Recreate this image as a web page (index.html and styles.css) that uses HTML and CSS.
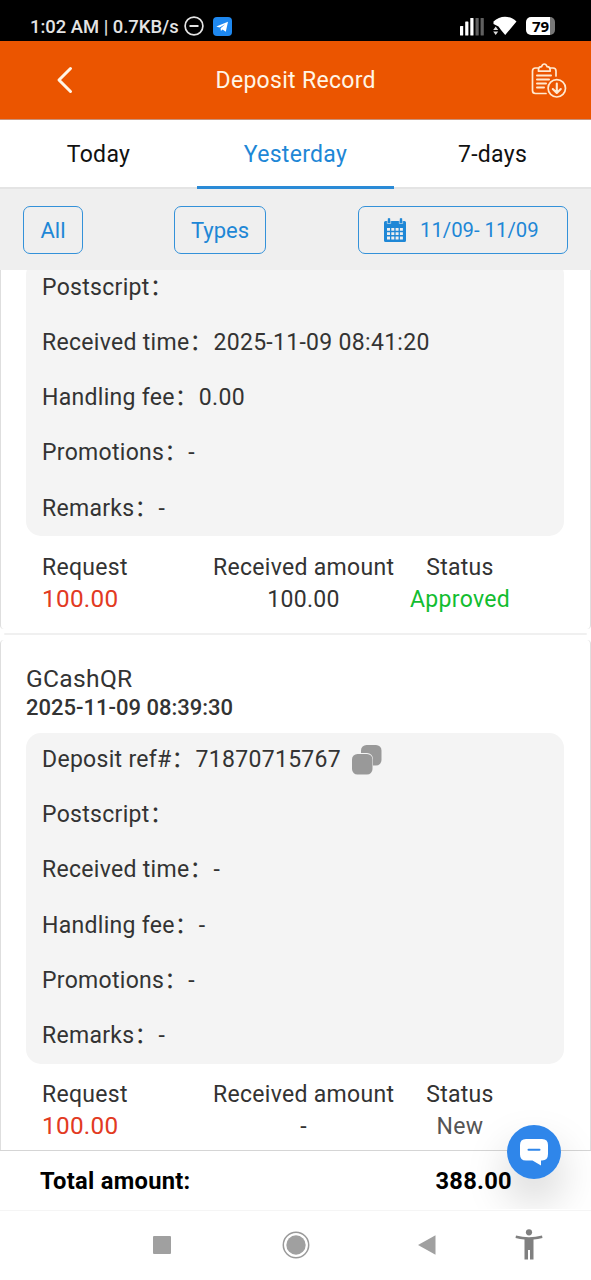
FILE: index.html
```html
<!DOCTYPE html>
<html lang="en">
<head>
<meta charset="utf-8">
<title>Deposit Record</title>
<link rel="stylesheet" href="styles.css">
</head>
<body>
<div class="screen">
  <div class="status-bar">
    <span class="clock">1:02 AM | 0.7KB/s</span>
    <svg class="dnd" width="20" height="20" viewBox="0 0 20 20"><circle cx="10" cy="10" r="8.9" fill="none" stroke="#e4e4e4" stroke-width="1.7"/><path d="M5.5 10h9" stroke="#e4e4e4" stroke-width="2"/></svg>
    <svg class="plane" width="19" height="19" viewBox="0 0 19 19"><rect width="19" height="19" rx="4" fill="#1e88f0"/><path d="M3.3 9.5 15 4.7 12.8 14.7 9.5 12.4 7.9 14 7.6 11.2 12.2 7.2 6.5 10.6Z" fill="#fff"/></svg>
    <span class="grow"></span>
    <svg width="25" height="19" viewBox="0 0 25 19"><g fill="#fff"><rect x="0" y="9" width="3.2" height="9.5" rx=".6"/><rect x="5.2" y="4.5" width="3.2" height="14" rx=".6"/><rect x="10.3" y="1" width="3.2" height="17.5" rx=".6"/></g><g fill="#606060"><rect x="15.5" y="1" width="3.2" height="17.5" rx=".6"/><rect x="20.6" y="1" width="3.2" height="17.5" rx=".6"/></g></svg>
    <svg class="wifi" width="24" height="20" viewBox="0 0 24 20"><path d="M.5 5.5C7-.8 17-.8 23.5 5.5L12.2 19 8 14 5.5 10.5.5 8Z" fill="#fff"/><path d="M2.7 10.5 5.2 14H.2ZM2.7 19 .2 15.5h5Z" fill="#ddd"/></svg>
    <span class="battery">79</span>
  </div>
  <header class="header">
    <svg class="back" width="17" height="28" viewBox="0 0 17 28"><path d="M14.5 2.5 3 14 14.5 25.5" fill="none" stroke="#fff5e6" stroke-width="3" stroke-linecap="round" stroke-linejoin="round"/></svg>
    <h1 class="title">Deposit Record</h1>
    <svg class="export" width="36" height="36" viewBox="0 0 36 36" fill="none" stroke="#ffe9d0" stroke-width="1.7" stroke-linecap="round" stroke-linejoin="round"><path d="M7 5H4.500Q1.500 5 1.500 8v19.500q0 3 3 3H15M19.500 5h2.500q3 0 3 3v5"/><path d="M7.500 8.200V6.500q0-2.500 3-2.800Q11.500 1 13.300 1t2.800 2.700q3 .3 3 2.800v1.700Z"/><path d="M6 12.500h14M6 16.500h12M6 20.500h9M6 24.500h7" stroke-width="2"/><circle cx="25.800" cy="25.300" r="8.700"/><path d="M25.800 20.500v9M21.800 26l4 4 4-4" stroke-width="2.100"/></svg>
  </header>
  <nav class="tabs">
    <div class="tab">Today</div>
    <div class="tab active">Yesterday</div>
    <div class="tab">7-days</div>
  </nav>
  <div class="filters">
    <button class="chip all">All</button>
    <button class="chip types">Types</button>
    <button class="chip dates">
      <svg width="22" height="24" viewBox="0 0 22 24"><path d="M0 4.500Q0 3 1.500 3H3.500V2q0-2 1.500-2t1.500 2v1h9V2q0-2 1.500-2t1.500 2v1h2Q22 3 22 4.500V22.500Q22 24 20.500 24H1.500Q0 24 0 22.500Z" fill="#1e87d6"/><path d="M3.300 1v4.500h3.400V1M15.300 1v4.500h3.400V1" fill="none" stroke="#efefef" stroke-width=".6"/><g fill="#efefef"><path d="M3 10h3v2.800H3zM7.300 10h3v2.800h-3zM11.600 10h3v2.800h-3zM15.900 10h3v2.800h-3zM3 14.300h3v2.800H3zM7.300 14.300h3v2.800h-3zM11.600 14.300h3v2.800h-3zM15.900 14.300h3v2.800h-3zM3 18.600h3v2.800H3zM7.300 18.600h3v2.800h-3zM11.600 18.600h3v2.800h-3zM15.900 18.600h3v2.800h-3z"/></g></svg>
      <span>11/09- 11/09</span>
    </button>
  </div>
  <main class="list">
    <article class="card first">
      <div class="details">
        <div class="row">Postscript<i>：</i></div>
        <div class="row">Received time<i>：</i>2025-11-09 08:41:20</div>
        <div class="row">Handling fee<i>：</i>0.00</div>
        <div class="row">Promotions<i>：</i>-</div>
        <div class="row">Remarks<i>：</i>-</div>
      </div>
      <div class="summary">
        <div><p>Request</p><p class="requested">100.00</p></div>
        <div class="center"><p>Received amount</p><p>100.00</p></div>
        <div class="center"><p>Status</p><p class="approved">Approved</p></div>
      </div>
    </article>
    <div class="divider"></div>
    <article class="card second">
      <h2 class="method">GCashQR</h2>
      <p class="time">2025-11-09 08:39:30</p>
      <div class="details">
        <div class="row">Deposit ref#<i>：</i>71870715767<svg class="copy" width="30" height="30" viewBox="0 0 30 30"><rect x="9" y="0" width="20.500" height="20.500" rx="5.500" fill="#999"/><rect x="-.5" y="8" width="21.500" height="22" rx="6" fill="#f4f4f4"/><rect x="0" y="9" width="20.500" height="20.500" rx="5.500" fill="#999"/></svg></div>
        <div class="row">Postscript<i>：</i></div>
        <div class="row">Received time<i>：</i>-</div>
        <div class="row">Handling fee<i>：</i>-</div>
        <div class="row">Promotions<i>：</i>-</div>
        <div class="row">Remarks<i>：</i>-</div>
      </div>
      <div class="summary">
        <div><p>Request</p><p class="requested">100.00</p></div>
        <div class="center"><p>Received amount</p><p>-</p></div>
        <div class="center"><p>Status</p><p class="new">New</p></div>
      </div>
    </article>
  </main>
  <footer class="total"><span>Total amount:</span><span class="sum">388.00</span></footer>
  <div class="system-nav">
    <svg class="recent" width="18" height="18"><rect width="18" height="18" rx="1" fill="#a0a0a0"/></svg>
    <svg class="home" width="28" height="28" viewBox="0 0 28 28"><circle cx="14" cy="14" r="12.700" fill="none" stroke="#999" stroke-width="1.500"/><circle cx="14" cy="14" r="9.700" fill="#a0a0a0"/></svg>
    <svg class="prev" width="18" height="20" viewBox="0 0 18 20"><path d="M0 10 17.500.3v19.400Z" fill="#a0a0a0"/></svg>
    <svg class="person" width="28" height="31" viewBox="0 0 28 31"><circle cx="14" cy="3.300" r="3.100" fill="#808080"/><path d="M1 6.500Q14 10 27 6.500L27.500 9Q23 10 18.500 10.500V30.500H15V21H13v9.500H9.500v-20Q5 10 .5 9Z" fill="#808080"/></svg>
  </div>
  <div class="shadow-clip"><div class="chat-shadow"></div></div>
  <button class="chat"><svg width="28" height="27" viewBox="0 0 28 27"><path d="M6 0H22Q28 0 28 6V15Q28 21.500 22 21.500H21V26.500L12.500 21.500H6Q0 21.500 0 15.500V6Q0 0 6 0Z" fill="#fff"/><path d="M8.500 10.700h11" stroke="#2f86ea" stroke-width="2" stroke-linecap="round"/></svg></button>
</div>
</body>
</html>
```
FILE: styles.css
```css
* { box-sizing: border-box; }
body { margin: 0; background: #fff; }
h1, h2, p { margin: 0; font-weight: 400; }
i { font-style: normal; }
button { background: none; padding: 0; margin: 0; font: inherit; letter-spacing: inherit; }
svg { display: block; flex: none; }
.screen {
  position: relative;
  width: 591px;
  height: 1280px;
  overflow: hidden;
  display: flex;
  flex-direction: column;
  font: 23px/32px Roboto, "Noto Sans CJK SC", sans-serif;
  letter-spacing: .3px;
  color: #333;
}
.screen > * { flex-shrink: 0; }
.status-bar {
  height: 41px;
  padding: 11px 36px 0 30px;
  display: flex;
  align-items: center;
  background: #000;
  color: #e4e4e4;
}
.clock { width: 149px; padding-top: 1px; font-size: 18.400px; font-weight: 500; letter-spacing: 0; white-space: nowrap; }
.dnd { margin-left: 5px; }
.plane { margin-left: 9px; }
.grow { flex: 1; }
.wifi { margin-left: 8px; }
.battery {
  width: 29px;
  height: 18px;
  margin-left: 9px;
  border-radius: 5px;
  background: linear-gradient(90deg, #fff 24px, #777 24px);
  color: #000;
  font: 700 15px/18px "Noto Sans", sans-serif;
  text-align: center;
  letter-spacing: 0;
}
.header {
  height: 79px;
  padding: 0 24px 0 56px;
  display: flex;
  align-items: center;
  background: #eb5500;
  border-bottom: 1px solid #c9927a;
}
.back { margin-right: 142.500px; }
.title { flex: 1; padding-top: 1px; font-size: 23px; color: #fff5e6; }
.export { margin-top: 1px; }
.tabs { height: 69px; display: flex; background: #fff; color: #111; }
.tab {
  flex: 1;
  padding-top: 19px;
  text-align: center;
  border-bottom: 2px solid #e4e4e4;
}
.tab.active { color: #1e87d6; border-bottom-width: 3px; border-color: #2a8ad6; }
.filters {
  height: 81px;
  padding: 17px 23px 0;
  display: flex;
  background: #efefef;
  color: #1e87d6;
}
.chip {
  height: 48px;
  padding-top: 1px;
  border: 1px solid #3391d9;
  border-radius: 7px;
  color: inherit;
  font-size: 22px;
  letter-spacing: 0;
}
.all { width: 60px; }
.types { width: 92px; margin-left: 91px; }
.dates {
  width: 210px;
  margin-left: auto;
  padding: 0 0 0 25px;
  display: flex;
  align-items: center;
  gap: 14px;
  font-size: 20.300px;
  white-space: pre;
}
.list { height: 880px; overflow: hidden; }
.card { border: solid #dedede; border-width: 0 1px; padding: 0 26px 0 25px; }
.first { height: 369px; margin-top: -9.700px; border-radius: 0 0 4px 4px; }
.divider { height: 2px; margin: 3.700px 4px 5px; background: #f0f0f0; border-radius: 2px; }
.second { height: 520px; padding-top: 23px; border-radius: 4px 4px 0 0; }
.method { font-size: 24.600px; line-height: 32px; }
.time { padding-top: 1px; font-weight: 500; font-size: 22px; line-height: 24px; letter-spacing: 0; }
.details { padding: 0 16px; border-radius: 15px; background: #f4f4f4; }
.second .details { margin-top: 12.500px; }
.row { height: 55.200px; display: flex; align-items: center; white-space: pre; }
.row i { width: 24px; }
.copy { margin: -1px 0 0 11px; }
.summary {
  display: grid;
  grid-template-columns: 171px 181px 132px;
  padding: 15.500px 0 0 16px;
  white-space: nowrap;
}
.center { text-align: center; }
.requested { margin-top: -1px; font-size: 24.300px; color: #e23a22; }
.approved { color: #12bd30; }
.new { color: #555; }
.total {
  height: 60px;
  padding: 14px 79px 0 40px;
  display: flex;
  justify-content: space-between;
  border-top: 1px solid #d5d5d5;
  color: #000;
  font-weight: 700;
  font-size: 23.700px;
}
.system-nav {
  height: 70px;
  padding: 0 0 2px 153px;
  display: flex;
  align-items: center;
  background: #fff;
  border-top: 1px solid #f5f5f5;
}
.home { margin-left: 111px; }
.prev { margin-left: 108px; }
.person { margin-left: 79px; }
.shadow-clip {
  position: absolute;
  right: 0;
  top: 1080px;
  width: 200px;
  height: 129px;
  overflow: hidden;
  pointer-events: none;
}
.chat-shadow {
  position: absolute;
  left: 116px;
  top: 45px;
  width: 54px;
  height: 54px;
  border-radius: 50%;
  box-shadow: 0 22px 44px rgba(0, 0, 0, .18);
}
.chat {
  position: absolute;
  left: 507px;
  top: 1125px;
  width: 54px;
  height: 54px;
  display: grid;
  place-items: center;
  border: 0;
  border-radius: 50%;
  background: #2f86ea;
}
```
